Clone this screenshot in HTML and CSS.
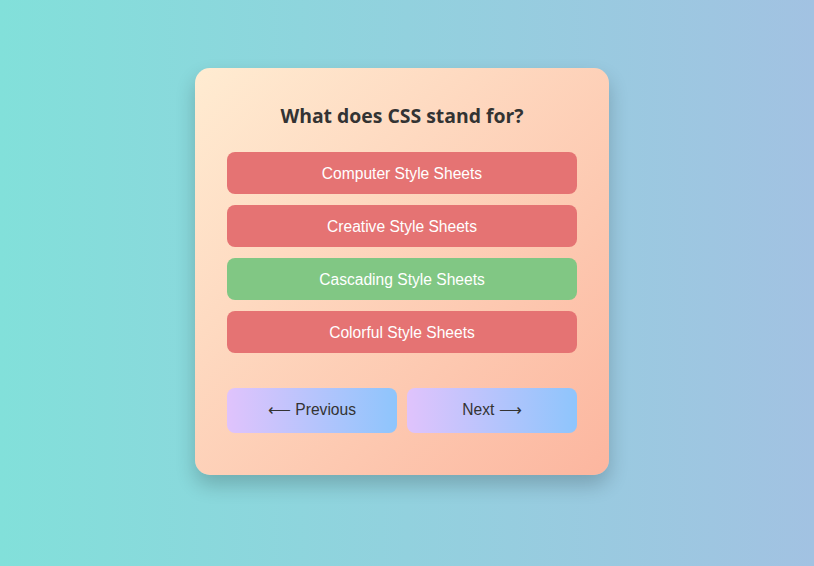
FILE: index.html
```html
<!DOCTYPE html>
<html lang="en">
<head>
<meta charset="utf-8">
<title>Quiz</title>
<link rel="stylesheet" href="styles.css">
</head>
<body>
<main class="page">
  <section class="card">
    <h2 class="question">What does CSS stand for?</h2>
    <div class="options">
      <button class="option wrong">Computer Style Sheets</button>
      <button class="option wrong">Creative Style Sheets</button>
      <button class="option right">Cascading Style Sheets</button>
      <button class="option wrong">Colorful Style Sheets</button>
    </div>
    <div class="nav">
      <button class="nav-btn">&#x27F5; Previous</button>
      <button class="nav-btn">Next &#x27F6;</button>
    </div>
  </section>
</main>
</body>
</html>
```
FILE: styles.css
```css
* { box-sizing: border-box; }
html, body { margin: 0; height: 100%; }
body {
  background: linear-gradient(to right, #82e0da, #a2c2e2);
  font-family: "Liberation Sans", Arial, sans-serif;
}
.page {
  height: 100%;
  display: flex;
  justify-content: center;
  padding: 68px 10px 0 0;
}
.card {
  width: 414px;
  height: 407px;
  padding: 34px 32px 40px;
  border-radius: 15px;
  background: linear-gradient(135deg, #ffecd2, #fcb69f);
  box-shadow: 0 10px 20px rgba(0, 0, 0, 0.2);
}
.question {
  margin: 0 0 22px;
  text-align: center;
  font-family: "Open Sans", "Noto Sans", sans-serif;
  font-weight: 700;
  font-size: 19.4px;
  line-height: 28px;
  color: #333;
}
.options {
  display: flex;
  flex-direction: column;
  gap: 11px;
}
.option {
  height: 42px;
  border: none;
  border-radius: 8px;
  font-family: "Liberation Sans", Arial, sans-serif;
  font-size: 15.6px;
  color: #fff;
  padding: 2px 0 0;
}
.wrong { background: #e57373; }
.right { background: #81c784; }
.nav {
  display: flex;
  gap: 10px;
  margin-top: 35px;
}
.nav-btn {
  flex: 1;
  height: 45px;
  border: none;
  border-radius: 8px;
  background: linear-gradient(to right, #e0c3fc, #8ec5fc);
  font-family: "Liberation Sans", Arial, sans-serif;
  font-size: 15.6px;
  color: #333;
  padding: 0 0 1px;
}
```
